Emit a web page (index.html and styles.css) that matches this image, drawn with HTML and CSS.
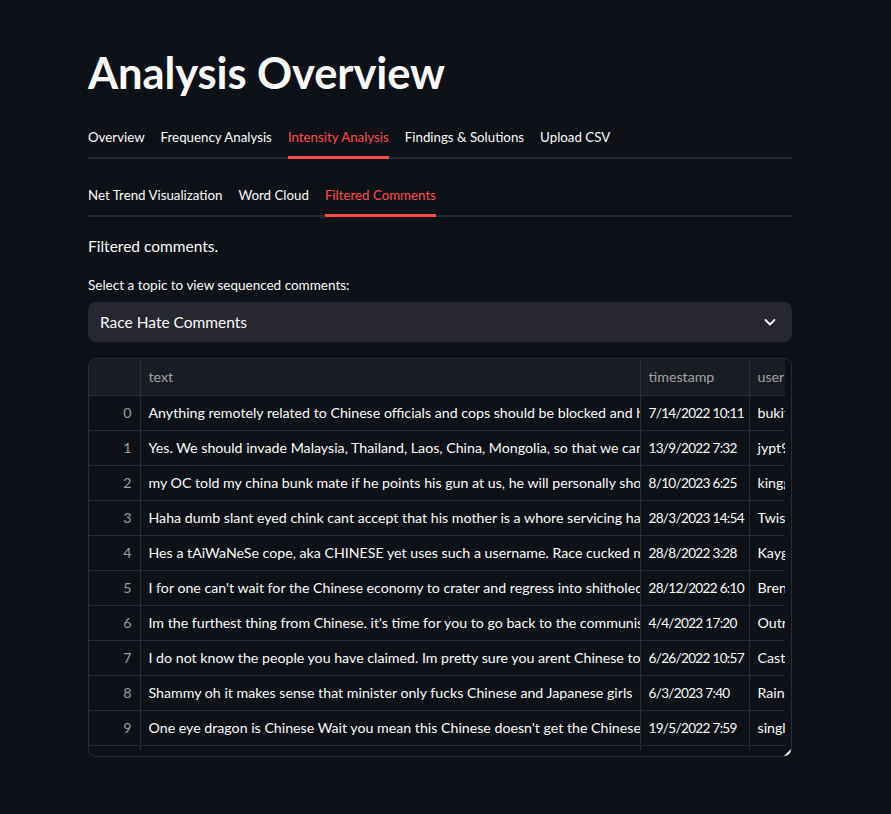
FILE: index.html
```html
<!DOCTYPE html>
<html>
<head>
<meta charset="utf-8">
<link rel="stylesheet" href="styles.css">
</head>
<body>
<main class="main">
  <h1 class="title">Analysis Overview</h1>
  <nav class="tabs tabs-top">
    <span class="tab">Overview</span>
    <span class="tab">Frequency Analysis</span>
    <span class="tab active">Intensity Analysis</span>
    <span class="tab">Findings &amp; Solutions</span>
    <span class="tab">Upload CSV</span>
  </nav>
  <nav class="tabs tabs-sub">
    <span class="tab">Net Trend Visualization</span>
    <span class="tab">Word Cloud</span>
    <span class="tab active">Filtered Comments</span>
  </nav>
  <p class="lead">Filtered comments.</p>
  <label class="label">Select a topic to view sequenced comments:</label>
  <div class="select">
    <span>Race Hate Comments</span>
    <svg class="chev" width="16" height="16" viewBox="0 0 16 16"><path d="M3.5 6 L8 10.5 L12.5 6" fill="none" stroke="#fafafa" stroke-width="1.8" stroke-linecap="round" stroke-linejoin="round"/></svg>
  </div>
  <div class="frame">
    <div class="clip">
      <table class="grid">
        <colgroup><col class="c-idx"><col class="c-text"><col class="c-ts"><col class="c-user"></colgroup>
        <thead>
          <tr><th></th><th>text</th><th>timestamp</th><th>username</th></tr>
        </thead>
        <tbody>
          <tr><td class="idx">0</td><td>Anything remotely related to Chinese officials and cops should be blocked and hung up</td><td class="ts">7/14/2022 10:11</td><td>bukitbatok</td></tr>
          <tr><td class="idx">1</td><td>Yes. We should invade Malaysia, Thailand, Laos, China, Mongolia, so that we can station</td><td class="ts">13/9/2022 7:32</td><td>jypt98</td></tr>
          <tr><td class="idx">2</td><td>my OC told my china bunk mate if he points his gun at us, he will personally shoot him</td><td class="ts">8/10/2023 6:25</td><td>kinggg</td></tr>
          <tr><td class="idx">3</td><td>Haha dumb slant eyed chink cant accept that his mother is a whore servicing harijans</td><td class="ts">28/3/2023 14:54</td><td>Twist</td></tr>
          <tr><td class="idx">4</td><td>Hes a tAiWaNeSe cope, aka CHINESE yet uses such a username. Race cucked maxed bro</td><td class="ts">28/8/2022 3:28</td><td>Kayg</td></tr>
          <tr><td class="idx">5</td><td>I for one can't wait for the Chinese economy to crater and regress into shitholedom soon</td><td class="ts">28/12/2022 6:10</td><td>Brend</td></tr>
          <tr><td class="idx">6</td><td>Im the furthest thing from Chinese. it's time for you to go back to the communist party</td><td class="ts">4/4/2022 17:20</td><td>Outra</td></tr>
          <tr><td class="idx">7</td><td>I do not know the people you have claimed. Im pretty sure you arent Chinese too, judging</td><td class="ts">6/26/2022 10:57</td><td>Caste</td></tr>
          <tr><td class="idx">8</td><td>Shammy oh it makes sense that minister only fucks Chinese and Japanese girls</td><td class="ts">6/3/2023 7:40</td><td>Raind</td></tr>
          <tr><td class="idx">9</td><td>One eye dragon is Chinese Wait you mean this Chinese doesn't get the Chinese privilege</td><td class="ts">19/5/2022 7:59</td><td>single</td></tr>
          <tr class="filler"><td></td><td></td><td></td><td></td></tr>
        </tbody>
      </table>
    </div>
    <span class="resize"></span>
  </div>
</main>
</body>
</html>
```
FILE: styles.css
```css
* { box-sizing: border-box; }
html, body { margin: 0; padding: 0; }
body {
  background: #0e1117;
  color: #fafafa;
  font-family: "Lato", "Liberation Sans", sans-serif;
  width: 891px;
  height: 814px;
  overflow: hidden;
}
.main {
  width: 704px;
  margin-left: 88px;
  padding-top: 44px;
}
.title {
  margin: 0;
  font-size: 43.5px;
  font-weight: 700;
  line-height: 56px;
  letter-spacing: -0.1px;
}
.tabs {
  display: flex;
  gap: 16px;
  border-bottom: 2px solid #262730;
  font-size: 13.3px;
}
.tabs-top { margin-top: 19px; }
.tabs-sub { margin-top: 18px; }
.tab {
  line-height: 20px;
  padding: 8px 0 9px;
  margin-bottom: -2px;
  border-bottom: 3px solid transparent;
  white-space: nowrap;
}
.tab.active {
  color: #ff4b4b;
  border-bottom-color: #ff4b4b;
}
.lead {
  margin: 17px 0 0;
  font-size: 15.5px;
  line-height: 24px;
}
.label {
  display: block;
  margin-top: 18px;
  font-size: 13.5px;
  line-height: 18px;
}
.select {
  margin-top: 8px;
  height: 40px;
  background: #262730;
  border-radius: 8px;
  display: flex;
  align-items: center;
  justify-content: space-between;
  padding: 0 14px 0 12px;
  font-size: 15.5px;
}
.chev { display: block; }
.frame {
  position: relative;
  margin-top: 16px;
  height: 399px;
  border: 1px solid #2a2c34;
  border-radius: 8px;
  overflow: hidden;
}
.clip {
  width: 696px;
  height: 391px;
  overflow: hidden;
}
.grid {
  border-collapse: collapse;
  table-layout: fixed;
  width: 768px;
  font-size: 14.2px;
}
.c-idx { width: 51px; }
.c-text { width: 500px; }
.c-ts { width: 109px; }
.c-user { width: 108px; }
.grid th, .grid td {
  height: 35px;
  padding: 0 8px;
  white-space: nowrap;
  overflow: hidden;
  text-overflow: clip;
  text-align: left;
  border-right: 1px solid #2a2c34;
  border-bottom: 1px solid #2a2c34;
}
.grid th {
  height: 36px;
  background: #1a1c24;
  color: rgba(250, 250, 250, 0.6);
  font-weight: 400;
}
.grid td.idx {
  text-align: right;
  color: rgba(250, 250, 250, 0.6);
}
.grid td.ts {
  font-size: 13.6px;
  letter-spacing: -0.7px;
}
.grid tr.filler td {
  height: 6px;
  border-bottom: none;
}
.resize {
  position: absolute;
  right: 0;
  bottom: 0;
  width: 0;
  height: 0;
  border-left: 7px solid transparent;
  border-bottom: 7px solid #fafafa;
}
```
